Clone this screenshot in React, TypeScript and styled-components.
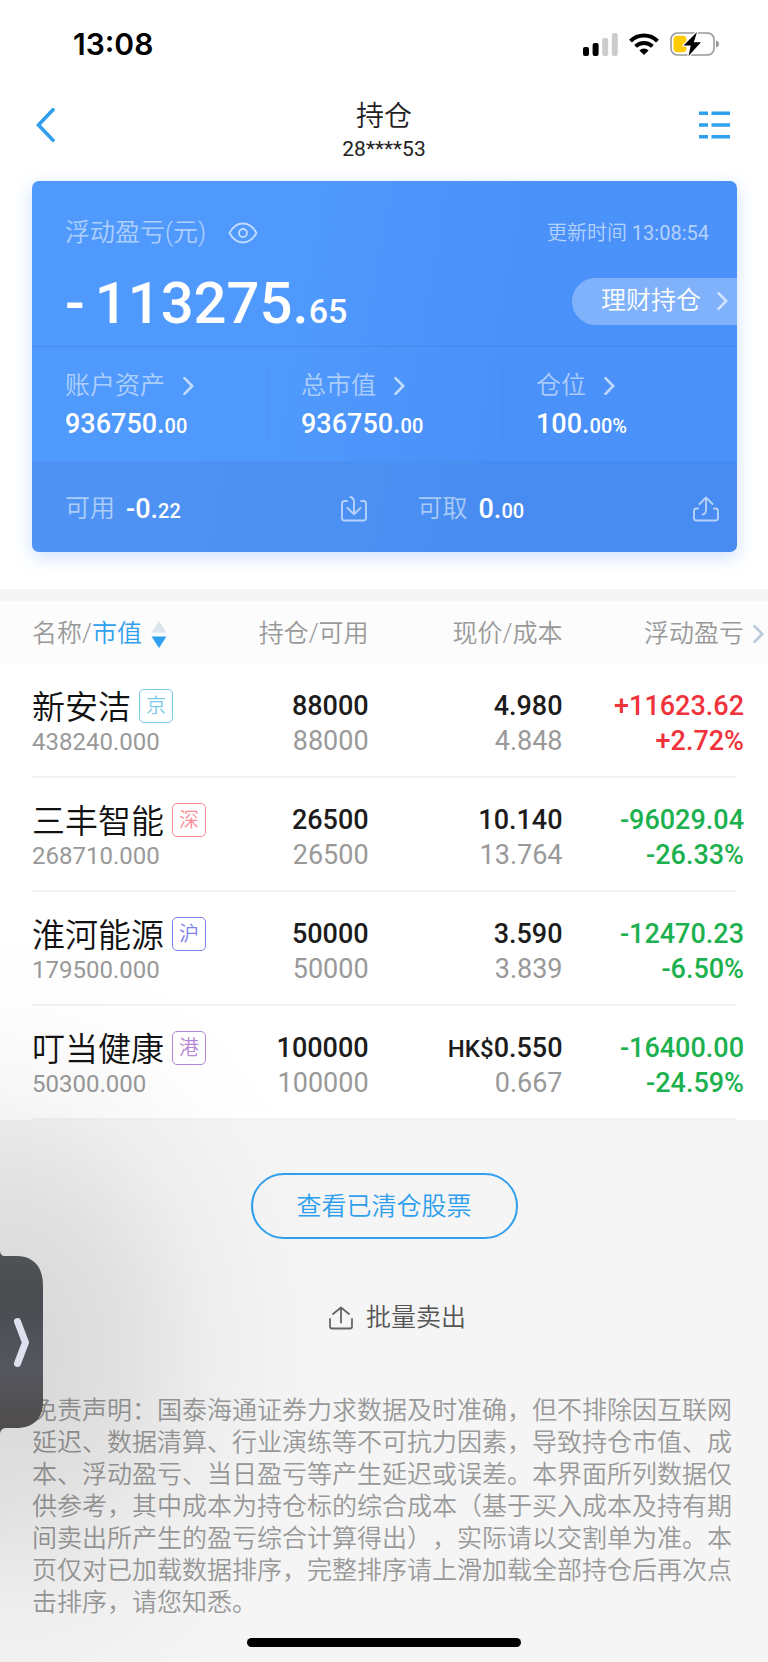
import React from "react";
import styled, { createGlobalStyle } from "styled-components";

const BLUE = "#2f9fee";

const GlobalStyle = createGlobalStyle`
  * { box-sizing: border-box; }
  body {
    margin: 0;
    background: #f5f5f5;
    font-family: Roboto, "Noto Sans CJK SC", sans-serif;
    font-size: 25px;
    font-weight: 350;
    line-height: 32px;
    color: #222;
  }
  button {
    margin: 0;
    padding: 0;
    border: 0;
    background: none;
    font: inherit;
    color: inherit;
    cursor: pointer;
  }
  svg { display: block; flex: none; }
`;

const Page = styled.div`
  position: relative;
  overflow: hidden;
  background: #f5f5f5;
`;

const StatusBar = styled.div`
  display: flex;
  justify-content: space-between;
  align-items: center;
  height: 88px;
  padding: 0 49px 0 73px;
  background: #fff;
`;

const Clock = styled.span`
  font-family: Inter, sans-serif;
  font-size: 30px;
  font-weight: 600;
  color: #000;
`;

const StatusIcons = styled.div`
  display: flex;
  align-items: center;
  gap: 11px;
`;

const NavBar = styled.header`
  display: grid;
  grid-template-columns: 1fr auto 1fr;
  align-items: center;
  height: 73px;
  padding: 0 38px 0 35px;
  background: #fff;
`;

const NavButton = styled.button<{ $end?: boolean }>`
  justify-self: ${(p) => (p.$end ? "end" : "start")};
  padding-bottom: 2px;
`;

const NavTitle = styled.div`
  display: flex;
  flex-direction: column;
  align-items: center;
  padding: 11px 0 0 3px;
`;

const Title = styled.h1`
  margin: 0;
  font-size: 28px;
  font-weight: 350;
  line-height: 36px;
  color: #222;
`;

const Account = styled.span`
  font-size: 21px;
  font-weight: 400;
  line-height: 28px;
`;

const Summary = styled.section`
  padding: 20px 31px 37px 32px;
  background: #fff;
`;

const Card = styled.div`
  overflow: hidden;
  border-radius: 7px;
  background: linear-gradient(100deg, #519afd 0%, #4f98fc 40%, #4a91f9 66%, #4a91f9 100%);
  box-shadow: 0 5px 18px rgba(74, 145, 249, 0.28);
  color: #fff;
`;

const CardTop = styled.div`
  display: flex;
  flex-direction: column;
  gap: 14px;
  height: 166px;
  padding: 36px 0 0 33px;
  border-bottom: 1px solid rgba(50, 120, 220, 0.4);
`;

const Line = styled.div`
  display: flex;
  justify-content: space-between;
  align-items: center;
`;

const Label = styled.span`
  color: rgba(255, 255, 255, 0.55);
`;

const LabelButton = styled.button<{ $gap: number }>`
  display: flex;
  align-items: center;
  gap: ${(p) => p.$gap}px;
  height: 32px;
  color: rgba(255, 255, 255, 0.55);
`;

const Updated = styled.span`
  padding-right: 28px;
  font-size: 20px;
  color: rgba(255, 255, 255, 0.6);

  time { font-weight: 400; }
`;

const Total = styled.div`
  padding-top: 4px;
  font-size: 58px;
  font-weight: 500;
  line-height: 72px;
`;

const Sign = styled.span`
  padding-right: 10px;
`;

const Decimals = styled.span<{ $large?: boolean }>`
  font-size: ${(p) => (p.$large ? 34 : 20)}px;
  line-height: 1;
`;

const WealthButton = styled.button`
  display: flex;
  justify-content: space-between;
  align-items: center;
  width: 165px;
  height: 47px;
  padding: 0 9px 0 29px;
  border-radius: 24px 0 0 24px;
  background: rgba(255, 255, 255, 0.3);
  color: #fff;
`;

const Metrics = styled.div`
  display: grid;
  grid-template-columns: repeat(3, 1fr);
  padding: 23px 0;
`;

const Metric = styled.div`
  display: grid;
  gap: 8px;
  padding-left: 33px;

  & + & {
    border-left: 1px dashed rgba(50, 110, 210, 0.3);
  }
`;

const Amount = styled.div`
  font-size: 27px;
  font-weight: 500;
  line-height: 28px;
`;

const CardBottom = styled.div`
  display: grid;
  grid-template-columns: repeat(2, 1fr);
  height: 91px;
  background: rgba(70, 120, 200, 0.16);
`;

const Cash = styled.div`
  display: flex;
  align-items: center;
  gap: 11px;
  padding: 5px 18px 0 33px;

  button { margin-left: auto; }
`;

const Holdings = styled.table`
  width: 100%;
  border-collapse: separate;
  border-spacing: 0;
  table-layout: fixed;
  border-top: 12px solid #f5f5f5;
  background: #fff;
`;

const HeadRow = styled.tr`
  height: 63px;
  background: #fcfcfc;
  color: #999;
`;

const HeadCell = styled.th<{ $width?: string; $first?: boolean; $last?: boolean }>`
  width: ${(p) => p.$width ?? "auto"};
  padding: 2px ${(p) => (p.$last ? 4 : 0)}px 0 ${(p) => (p.$first ? 32 : 0)}px;
  font-weight: 350;
  text-align: ${(p) => (p.$first ? "left" : "right")};
  white-space: nowrap;
`;

const HeadButton = styled.button`
  display: inline-flex;
  align-items: center;
  gap: 9px;
  vertical-align: middle;
`;

const Active = styled.span`
  color: ${BLUE};
`;

const StockRow = styled.tr`
  height: 114px;
  background: linear-gradient(#f4f4f4, #f4f4f4) 32px 100% / calc(100% - 63px) 2px no-repeat;
`;

const NameCell = styled.th`
  padding: 5px 0 0 32px;
  font-weight: 350;
  text-align: left;
  white-space: nowrap;
`;

const NameLine = styled.div`
  display: flex;
  align-items: center;
  gap: 8px;
  font-size: 33px;
  line-height: 34px;
  color: #111;
`;

const Market = styled.span<{ $color: string }>`
  display: flex;
  align-items: center;
  justify-content: center;
  width: 34px;
  height: 34px;
  margin-bottom: 3px;
  border: 1px solid ${(p) => p.$color};
  border-radius: 5px;
  font-size: 20px;
  color: ${(p) => p.$color};
`;

const Value = styled.div`
  font-size: 24px;
  font-weight: 400;
  line-height: 32px;
  color: #999;
`;

const NumberCell = styled.td<{ $last?: boolean; $color?: string }>`
  padding: 6px ${(p) => (p.$last ? 24 : 0)}px 0 0;
  font-size: 27px;
  font-weight: 500;
  line-height: 35px;
  text-align: right;
  white-space: nowrap;
  color: ${(p) => p.$color ?? "#1c1c1c"};
`;

const Muted = styled.div`
  font-weight: 400;
  color: #999;
`;

const Currency = styled.span`
  font-size: 24px;
  line-height: 1;
`;

const Footer = styled.footer`
  display: flex;
  flex-direction: column;
  align-items: center;
  padding-top: 53px;
`;

const ClearedButton = styled.button`
  width: 267px;
  height: 66px;
  padding-top: 2px;
  border: 2px solid ${BLUE};
  border-radius: 33px;
  color: ${BLUE};
`;

const BatchButton = styled.button`
  display: flex;
  align-items: center;
  gap: 13px;
  margin-top: 63px;
  padding-left: 27px;
  color: #555;
`;

const Disclaimer = styled.p`
  margin: 61px 0 0;
  padding: 0 32px;
  color: #999;
  text-spacing-trim: space-all;
`;

const HomeIndicator = styled.div`
  width: 274px;
  height: 9px;
  margin: 19px 0 15px;
  border-radius: 5px;
  background: #000;
`;

const SideShade = styled.div`
  position: absolute;
  left: 0;
  top: 900px;
  width: 400px;
  height: 900px;
  pointer-events: none;
  background: radial-gradient(
    ellipse 350px 430px at 0 50%,
    rgba(0, 0, 0, 0.13) 0%,
    rgba(0, 0, 0, 0.085) 34%,
    rgba(0, 0, 0, 0.032) 60%,
    rgba(0, 0, 0, 0.008) 82%,
    rgba(0, 0, 0, 0) 100%
  );
`;

const SideHandle = styled.button`
  position: absolute;
  left: 0;
  top: 1250px;
`;

const Chevron = ({ color = "rgba(255,255,255,.65)", height = 18 }: { color?: string; height?: number }) => (
  <svg width="11" height={height} viewBox="0 0 11 18" fill="none" stroke={color} strokeWidth="2.6" aria-hidden="true">
    <path d="M1.5 1.2 9.2 9l-7.700 7.800" strokeLinecap="round" strokeLinejoin="miter" />
  </svg>
);

const Signal = () => (
  <svg width="35" height="23" viewBox="0 0 35 23" aria-hidden="true">
    <rect x="0" y="14" width="6" height="9" rx="2" />
    <rect x="9.600" y="10" width="6" height="13" rx="2" />
    <rect x="19.200" y="5" width="6" height="18" rx="2" fill="#ccc" />
    <rect x="28.800" y="0" width="6" height="23" rx="2" fill="#ccc" />
  </svg>
);

const Wifi = () => (
  <svg width="30" height="22" viewBox="0 0 30 22" fill="none" stroke="#000" strokeWidth="4" aria-hidden="true">
    <path d="M1.500 8.200A19 19 0 0 1 28.500 8.200" />
    <path d="M6.600 13.400A12 12 0 0 1 23.400 13.400" />
    <path d="M15 22 10.400 17.400A6.800 6.800 0 0 1 19.600 17.400Z" fill="#000" stroke="none" />
  </svg>
);

const Battery = () => (
  <svg width="49" height="24" viewBox="0 0 49 24" aria-hidden="true">
    <rect x="1" y="1" width="43" height="22" rx="6.500" fill="none" stroke="#999" strokeWidth="1.600" />
    <path d="M46 8.500c2 .6 3 1.900 3 3.500s-1 2.900-3 3.500z" fill="#999" />
    <rect x="3.500" y="3.800" width="13" height="16.500" rx="4" fill="#fecb04" />
    <path d="M27 0 13.500 13.500h7.200L18.500 24 31 10.300h-7.200z" fill="#000" stroke="#fff" strokeWidth="2.400" paintOrder="stroke" strokeLinejoin="round" />
  </svg>
);

const Back = () => (
  <svg width="20" height="34" viewBox="0 0 20 34" fill="none" stroke={BLUE} strokeWidth="3.600" aria-hidden="true">
    <path d="M18 1.800 3.500 17 18 32.200" strokeLinecap="round" />
  </svg>
);

const List = () => (
  <svg width="31" height="28" viewBox="0 0 31 28" stroke={BLUE} strokeWidth="3.600" aria-hidden="true">
    <path d="M0 2.200h9M12.500 2.200H31M0 14h9M12.500 14H31M0 25.800h9M12.500 25.800H31" />
  </svg>
);

const Eye = () => (
  <svg width="30" height="22" viewBox="0 0 30 22" fill="none" stroke="rgba(255,255,255,.65)" strokeWidth="1.800" aria-hidden="true">
    <path d="M1.500 11C5 4.500 9.600 1.500 15 1.500S25 4.500 28.500 11C25 17.500 20.400 20.500 15 20.500S5 17.500 1.500 11Z" strokeLinejoin="round" />
    <circle cx="15" cy="11" r="4" />
  </svg>
);

const TransferIn = () => (
  <svg width="26" height="26" viewBox="0 0 26 26" fill="none" stroke="rgba(255,255,255,.6)" strokeWidth="1.900" strokeLinecap="round" strokeLinejoin="round" aria-hidden="true">
    <path d="M6 5H3.500Q1 5 1 7.500V22q0 2.500 2.500 2.500h19Q25 24.500 25 22V7.500Q25 5 22.500 5H20" />
    <path d="M9.500 1Q13 2 13 6v12M6.500 12l6.500 6.300 6.500-6.300" />
  </svg>
);

const TransferOut = () => (
  <svg width="26" height="26" viewBox="0 0 26 26" fill="none" stroke="rgba(255,255,255,.6)" strokeWidth="1.900" strokeLinecap="round" strokeLinejoin="round" aria-hidden="true">
    <path d="M5 12.500H3.500Q1 12.500 1 15v7q0 2.500 2.500 2.500h19Q25 24.500 25 22v-7q0-2.500-2.500-2.500H21" />
    <path d="M9.800 18.500Q13 18 13 14V1.500M6.500 8 13 1.500 19.500 8" />
  </svg>
);

const Batch = () => (
  <svg width="24" height="24" viewBox="0 0 24 24" fill="none" stroke="#666" strokeWidth="1.800" strokeLinecap="round" strokeLinejoin="round" aria-hidden="true">
    <path d="M1 13v7.500Q1 22.500 3 22.500h18q2 0 2-2V13M12 16.500V1.500M4 8l8-6.500L20 8" />
  </svg>
);

const SortArrows = () => (
  <svg width="16" height="27" viewBox="0 0 16 27" aria-hidden="true">
    <path d="M8 0 15.500 11.500H.5z" fill="#dbe4ec" />
    <path d="M8 27 .5 15.500h15z" fill={BLUE} />
  </svg>
);

const HandleShape = () => (
  <svg width="44" height="184" viewBox="0 0 44 184" aria-hidden="true">
    <defs>
      <linearGradient id="handle" x1="0" y1="0" x2="0" y2="1">
        <stop offset="0" stopColor="#4e5355" />
        <stop offset="0.300" stopColor="#494d51" />
        <stop offset="0.650" stopColor="#55575e" />
        <stop offset="1" stopColor="#4f4b4b" />
      </linearGradient>
    </defs>
    <path d="M0 0C0 4 2 6 5 6H16C34 6 43 17 43 36V152C43 168 34 178 16 178H6C2 178 0 181 0 184Z" fill="url(#handle)" />
    <path d="M17.500 71.500 25.500 92.500 17.500 113.500" fill="none" stroke="#dfe1ef" strokeWidth="7" strokeLinecap="round" strokeLinejoin="round" />
  </svg>
);

const RED = "#f0333a";
const GREEN = "#1cb14e";

const stocks = [
  { name: "新安洁", market: "京", tint: "#7ccbe6", value: "438240.000", held: "88000", free: "88000", currency: "", price: "4.980", cost: "4.848", profit: "+11623.62", rate: "+2.72%", color: RED },
  { name: "三丰智能", market: "深", tint: "#fc8d97", value: "268710.000", held: "26500", free: "26500", currency: "", price: "10.140", cost: "13.764", profit: "-96029.04", rate: "-26.33%", color: GREEN },
  { name: "淮河能源", market: "沪", tint: "#7c80ea", value: "179500.000", held: "50000", free: "50000", currency: "", price: "3.590", cost: "3.839", profit: "-12470.23", rate: "-6.50%", color: GREEN },
  { name: "叮当健康", market: "港", tint: "#b787d6", value: "50300.000", held: "100000", free: "100000", currency: "HK$", price: "0.550", cost: "0.667", profit: "-16400.00", rate: "-24.59%", color: GREEN },
];

const metrics = [
  { label: "账户资产", whole: "936750.", decimals: "00" },
  { label: "总市值", whole: "936750.", decimals: "00" },
  { label: "仓位", whole: "100.", decimals: "00%" },
];

export default function App() {
  return (
    <Page>
      <GlobalStyle />
      <StatusBar>
        <Clock>13:08</Clock>
        <StatusIcons>
          <Signal />
          <Wifi />
          <Battery />
        </StatusIcons>
      </StatusBar>
      <NavBar>
        <NavButton aria-label="返回"><Back /></NavButton>
        <NavTitle>
          <Title>持仓</Title>
          <Account>28****53</Account>
        </NavTitle>
        <NavButton $end aria-label="菜单"><List /></NavButton>
      </NavBar>

      <Summary>
        <Card>
          <CardTop>
            <Line>
              <LabelButton $gap={22}>浮动盈亏(元)<Eye /></LabelButton>
              <Updated>更新时间 <time>13:08:54</time></Updated>
            </Line>
            <Line>
              <Total><Sign>-</Sign>113275.<Decimals $large>65</Decimals></Total>
              <WealthButton>理财持仓<Chevron /></WealthButton>
            </Line>
          </CardTop>
          <Metrics>
            {metrics.map((m) => (
              <Metric key={m.label}>
                <LabelButton $gap={18}>{m.label}<Chevron /></LabelButton>
                <Amount>{m.whole}<Decimals>{m.decimals}</Decimals></Amount>
              </Metric>
            ))}
          </Metrics>
          <CardBottom>
            <Cash>
              <Label>可用</Label>
              <Amount>-0.<Decimals>22</Decimals></Amount>
              <button aria-label="转入"><TransferIn /></button>
            </Cash>
            <Cash>
              <Label>可取</Label>
              <Amount>0.<Decimals>00</Decimals></Amount>
              <button aria-label="转出"><TransferOut /></button>
            </Cash>
          </CardBottom>
        </Card>
      </Summary>

      <Holdings>
        <thead>
          <HeadRow>
            <HeadCell $first $width="31.25%">
              <HeadButton><span>名称/<Active>市值</Active></span><SortArrows /></HeadButton>
            </HeadCell>
            <HeadCell $width="16.75%">持仓/可用</HeadCell>
            <HeadCell $width="25.25%">现价/成本</HeadCell>
            <HeadCell $last>
              <HeadButton>浮动盈亏<Chevron color="#b9c8dc" height={20} /></HeadButton>
            </HeadCell>
          </HeadRow>
        </thead>
        <tbody>
          {stocks.map((s) => (
            <StockRow key={s.name}>
              <NameCell scope="row">
                <NameLine>{s.name}<Market $color={s.tint}>{s.market}</Market></NameLine>
                <Value>{s.value}</Value>
              </NameCell>
              <NumberCell>{s.held}<Muted>{s.free}</Muted></NumberCell>
              <NumberCell>
                {s.currency && <Currency>{s.currency}</Currency>}{s.price}
                <Muted>{s.cost}</Muted>
              </NumberCell>
              <NumberCell $last $color={s.color}>{s.profit}<div>{s.rate}</div></NumberCell>
            </StockRow>
          ))}
        </tbody>
      </Holdings>

      <Footer>
        <ClearedButton>查看已清仓股票</ClearedButton>
        <BatchButton><Batch />批量卖出</BatchButton>
        <Disclaimer>
          免责声明：国泰海通证券力求数据及时准确，但不排除因互联网延迟、数据清算、行业演练等不可抗力因素，导致持仓市值、成本、浮动盈亏、当日盈亏等产生延迟或误差。本界面所列数据仅供参考，其中成本为持仓标的综合成本（基于买入成本及持有期间卖出所产生的盈亏综合计算得出），实际请以交割单为准。本页仅对已加载数据排序，完整排序请上滑加载全部持仓后再次点击排序，请您知悉。
        </Disclaimer>
        <HomeIndicator />
      </Footer>

      <SideShade />
      <SideHandle aria-label="展开侧栏"><HandleShape /></SideHandle>
    </Page>
  );
}
